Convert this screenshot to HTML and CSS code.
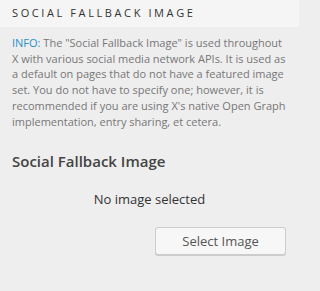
FILE: index.html
```html
<!DOCTYPE html>
<html>
<head>
<meta charset="utf-8">
<link rel="stylesheet" href="styles.css">
</head>
<body>
<div class="panel">
  <div class="panel-header">Social Fallback Image</div>
  <div class="panel-body">
    <p class="info"><span class="info-label">INFO:</span> The "Social Fallback Image" is used throughout X with various social media network APIs. It is used as a default on pages that do not have a featured image set. You do not have to specify one; however, it is recommended if you are using X's native Open Graph implementation, entry sharing, et cetera.</p>
    <h3 class="field-title">Social Fallback Image</h3>
    <div class="no-image">No image selected</div>
    <div class="actions">
      <button class="btn">Select Image</button>
    </div>
  </div>
</div>
</body>
</html>
```
FILE: styles.css
```css
html, body {
  margin: 0;
  padding: 0;
  background: #eeeeee;
}
body {
  font-family: "Open Sans", "Liberation Sans", sans-serif;
  min-height: 100vh;
  overflow: hidden;
}
.panel {
  width: 299px;
  display: flex;
  flex-direction: column;
}
.panel-header {
  height: 27px;
  box-sizing: border-box;
  background: #f5f5f5;
  padding: 5px 12px 0;
  font-size: 11px;
  line-height: 16px;
  letter-spacing: 2.6px;
  text-transform: uppercase;
  color: #333;
  white-space: nowrap;
}
.panel-body {
  padding: 8px 12px 0;
}
.info {
  margin: 0;
  font-size: 11px;
  line-height: 15.7px;
  color: #777;
}
.info-label {
  color: #2a8fc9;
}
.field-title {
  margin: 22px 0 0;
  font-size: 15px;
  font-weight: 600;
  line-height: 20px;
  color: #444;
}
.no-image {
  margin-top: 19px;
  text-align: center;
  font-size: 13px;
  line-height: 18px;
  color: #333;
}
.actions {
  display: flex;
  justify-content: flex-end;
  margin-top: 19px;
  padding-right: 1px;
}
.btn {
  width: 131px;
  height: 28px;
  box-sizing: border-box;
  background: #f7f7f7;
  border: 1px solid #cccccc;
  border-radius: 3px;
  box-shadow: 0 1px 0 #cccccc;
  font-family: "Open Sans", "Liberation Sans", sans-serif;
  font-size: 13px;
  color: #555;
  padding: 0;
}
```
